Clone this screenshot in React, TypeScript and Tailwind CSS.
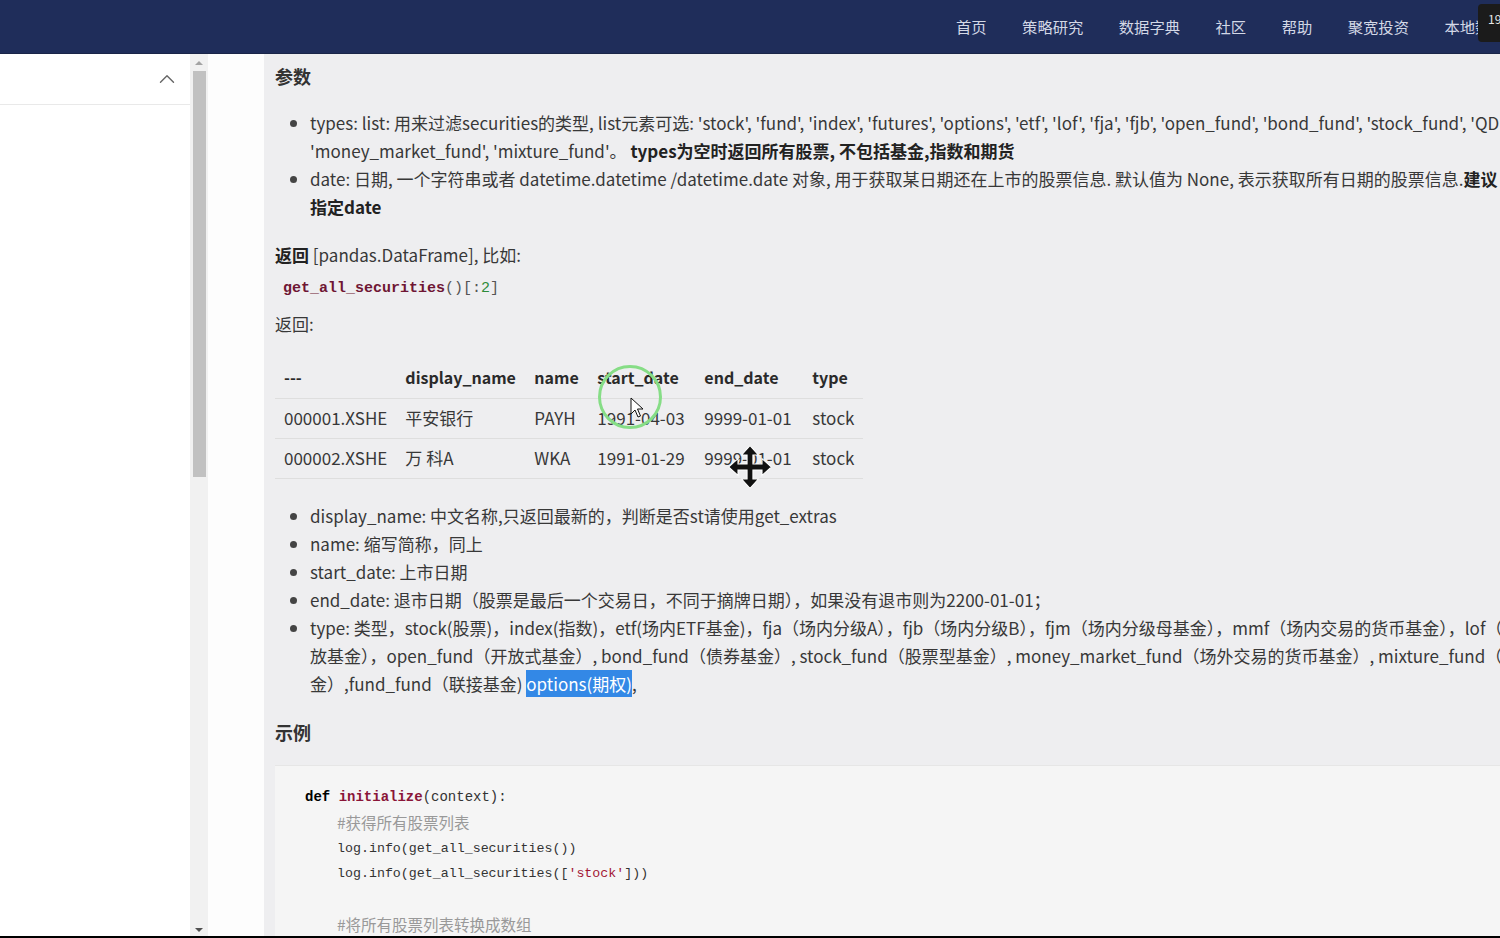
import { ChevronUp } from "lucide-react";

const navItems = ["首页", "策略研究", "数据字典", "社区", "帮助", "聚宽投资", "本地数据"];

const sans = "font-['Noto_Sans_CJK_SC','Noto_Sans',sans-serif]";
const mono = "font-['Liberation_Mono','Noto_Sans_CJK_SC',monospace]";

function MoveCursor() {
  return (
    <svg width="46" height="46" viewBox="0 0 44 44" className="absolute left-[727px] top-[444px]">
      <g fill="#111" stroke="#fff" strokeWidth="1">
        <path d="M22 1.5 L30 10.5 L24.8 10.5 L24.8 19.2 L33.5 19.2 L33.5 14 L42.5 22 L33.5 30 L33.5 24.8 L24.8 24.8 L24.8 33.5 L30 33.5 L22 42.5 L14 33.5 L19.2 33.5 L19.2 24.8 L10.5 24.8 L10.5 30 L1.5 22 L10.5 14 L10.5 19.2 L19.2 19.2 L19.2 10.5 L14 10.5 Z" />
      </g>
    </svg>
  );
}

function ArrowCursor() {
  return (
    <svg width="14" height="22" viewBox="0 0 14 22" className="absolute left-[630px] top-[397px]">
      <path d="M1 1 L1 17 L5 13 L8 20 L10.5 19 L7.5 12 L13 12 Z" fill="#fff" stroke="#111" strokeWidth="1" />
    </svg>
  );
}

export default function App() {
  return (
    <div className={`relative w-[1500px] h-[938px] overflow-hidden bg-white flex flex-col ${sans}`}>
      {/* top bar */}
      <header className="h-[54px] shrink-0 bg-[#1f2d5a] border-b border-[#1a2548] flex items-center pl-[956px] pr-[22px]">
        <nav className="flex-1 min-w-0 overflow-hidden flex gap-[35.5px] text-[15.3px] text-[#d3d8e6] whitespace-nowrap">
          {navItems.map((n) => (
            <span key={n}>{n}</span>
          ))}
        </nav>
      </header>
      <div className="absolute right-0 top-[4px] w-[22px] h-[38px] bg-[#1b1b1b] rounded-l-[4px] text-[12px] text-[#e8e8e8] pl-[10px] pt-[9px] leading-none overflow-hidden">
        19
      </div>

      <div className="flex flex-1 min-h-0">
        {/* sidebar */}
        <aside className="w-[190px] shrink-0 bg-white">
          <div className="h-[51px] border-b border-[#e9e9e9] flex justify-end items-center pr-[10px]">
            <ChevronUp className="w-[26px] h-[26px] text-[#666]" strokeWidth={1.3} />
          </div>
        </aside>
        <div className="w-[18px] shrink-0 bg-[#f1f1f1] flex flex-col items-center">
          <div className="h-[17px] flex items-center justify-center">
            <div className="w-0 h-0 border-x-[4px] border-x-transparent border-b-[4px] border-b-[#a3a3a3]" />
          </div>
          <div className="w-[13px] h-[406px] bg-[#c1c1c1]" />
          <div className="flex-1" />
          <div className="h-[17px] flex items-center justify-center">
            <div className="w-0 h-0 border-x-[4px] border-x-transparent border-t-[4px] border-t-[#505050]" />
          </div>
        </div>
        <div className="w-[56px] shrink-0 bg-[#fdfdfd]" />

        {/* content */}
        <main className="flex-1 min-w-0 bg-[#eeeef0] overflow-hidden pl-[11px] pt-[8px] text-[17px] leading-[28px] text-[#383838] whitespace-nowrap">
          <h3 className="text-[18px] font-bold text-[#333]">参数</h3>
          <ul className="list-disc pl-[35px] mt-[19px] marker:text-[#444]">
            <li>
              types: list: 用来过滤securities的类型, list元素可选: 'stock', 'fund', 'index', 'futures', 'options', 'etf', 'lof', 'fja', 'fjb', 'open_fund', 'bond_fund', 'stock_fund', 'QDII_fund',
              <br />
              'money_market_fund', 'mixture_fund'。 <b className="font-bold text-[#222]">types为空时返回所有股票, 不包括基金,指数和期货</b>
            </li>
            <li>
              date: 日期, 一个字符串或者 datetime.datetime /datetime.date 对象, 用于获取某日期还在上市的股票信息. 默认值为 None, 表示获取所有日期的股票信息.<b className="text-[#222]">建议</b>
              <br />
              <b className="text-[#222]">指定date</b>
            </li>
          </ul>

          <p className="mt-[20px]">
            <b className="text-[#222]">返回</b> [pandas.DataFrame], 比如:
          </p>
          <p className={`mt-[6px] pl-[8px] ${mono} text-[15px]`}>
            <span className="text-[#6f1634] font-bold">get_all_securities</span>
            <span className="text-[#555]">()[:</span>
            <span className="text-[#2e8b3a]">2</span>
            <span className="text-[#555]">]</span>
          </p>
          <p className="mt-[7px]">返回:</p>

          <table className="mt-[19px] border-collapse text-left">
            <thead>
              <tr className="h-[41px] border-b border-[#dedede] text-[16px] text-[#2a2a2a]">
                <th className="w-[120px] px-[9px] font-bold">---</th>
                <th className="w-[129px] px-[9px] font-bold">display_name</th>
                <th className="w-[63px] px-[9px] font-bold">name</th>
                <th className="w-[107px] px-[9px] font-bold">start_date</th>
                <th className="w-[108px] px-[9px] font-bold">end_date</th>
                <th className="w-[58px] px-[9px] font-bold">type</th>
              </tr>
            </thead>
            <tbody>
              <tr className="h-[40px] border-b border-[#dedede]">
                <td className="px-[9px]">000001.XSHE</td>
                <td className="px-[9px]">平安银行</td>
                <td className="px-[9px]">PAYH</td>
                <td className="px-[9px]">1991-04-03</td>
                <td className="px-[9px]">9999-01-01</td>
                <td className="px-[9px]">stock</td>
              </tr>
              <tr className="h-[40px] border-b border-[#dedede]">
                <td className="px-[9px]">000002.XSHE</td>
                <td className="px-[9px]">万 科A</td>
                <td className="px-[9px]">WKA</td>
                <td className="px-[9px]">1991-01-29</td>
                <td className="px-[9px]">9999-01-01</td>
                <td className="px-[9px]">stock</td>
              </tr>
            </tbody>
          </table>

          <ul className="list-disc pl-[35px] mt-[23px] marker:text-[#444]">
            <li>display_name: 中文名称,只返回最新的，判断是否st请使用get_extras</li>
            <li>name: 缩写简称，同上</li>
            <li>start_date: 上市日期</li>
            <li>end_date: 退市日期（股票是最后一个交易日，不同于摘牌日期），如果没有退市则为2200-01-01；</li>
            <li>
              type: 类型，stock(股票)，index(指数)，etf(场内ETF基金)，fja（场内分级A），fjb（场内分级B），fjm（场内分级母基金），mmf（场内交易的货币基金），lof（场内开
              <br />
              放基金），open_fund（开放式基金）, bond_fund（债券基金）, stock_fund（股票型基金）, money_market_fund（场外交易的货币基金）, mixture_fund（混合型基
              <br />
              金）,fund_fund（联接基金) <span className="inline-block leading-[27px] bg-[#3388e6] text-white">options(期权)</span>,
            </li>
          </ul>

          <h3 className="mt-[20px] text-[18px] font-bold text-[#333]">示例</h3>

          <div className={`mt-[19px] h-[200px] bg-[#f5f5f5] border-t border-[#e6e6e6] pl-[30px] pt-[19px] ${mono} text-[13.3px] leading-[25.5px] text-[#333]`}>
            <div className="text-[14px]">
              <span className="font-bold text-black">def</span>{" "}
              <span className="font-bold text-[#8a1538]">initialize</span>(context):
            </div>
            <div className="pl-[32px]">
              <div className={`${sans} text-[15.5px] text-[#999]`}>#获得所有股票列表</div>
              <div>log.info(get_all_securities())</div>
              <div>
                log.info(get_all_securities([<span className="text-[#a31535]">'stock'</span>]))
              </div>
              <div className="h-[25.5px]" />
              <div className={`${sans} text-[15.5px] leading-[24px] text-[#999]`}>#将所有股票列表转换成数组</div>
            </div>
          </div>
        </main>
      </div>

      {/* video frame edge */}
      <div className="absolute left-0 right-0 bottom-0 h-[2px] bg-black" />

      {/* overlays: click ring and cursors */}
      <div className="absolute left-[598px] top-[365px] w-[64px] h-[64px] rounded-full border-[3px] border-[#86dd86]" />
      <ArrowCursor />
      <MoveCursor />
    </div>
  );
}
